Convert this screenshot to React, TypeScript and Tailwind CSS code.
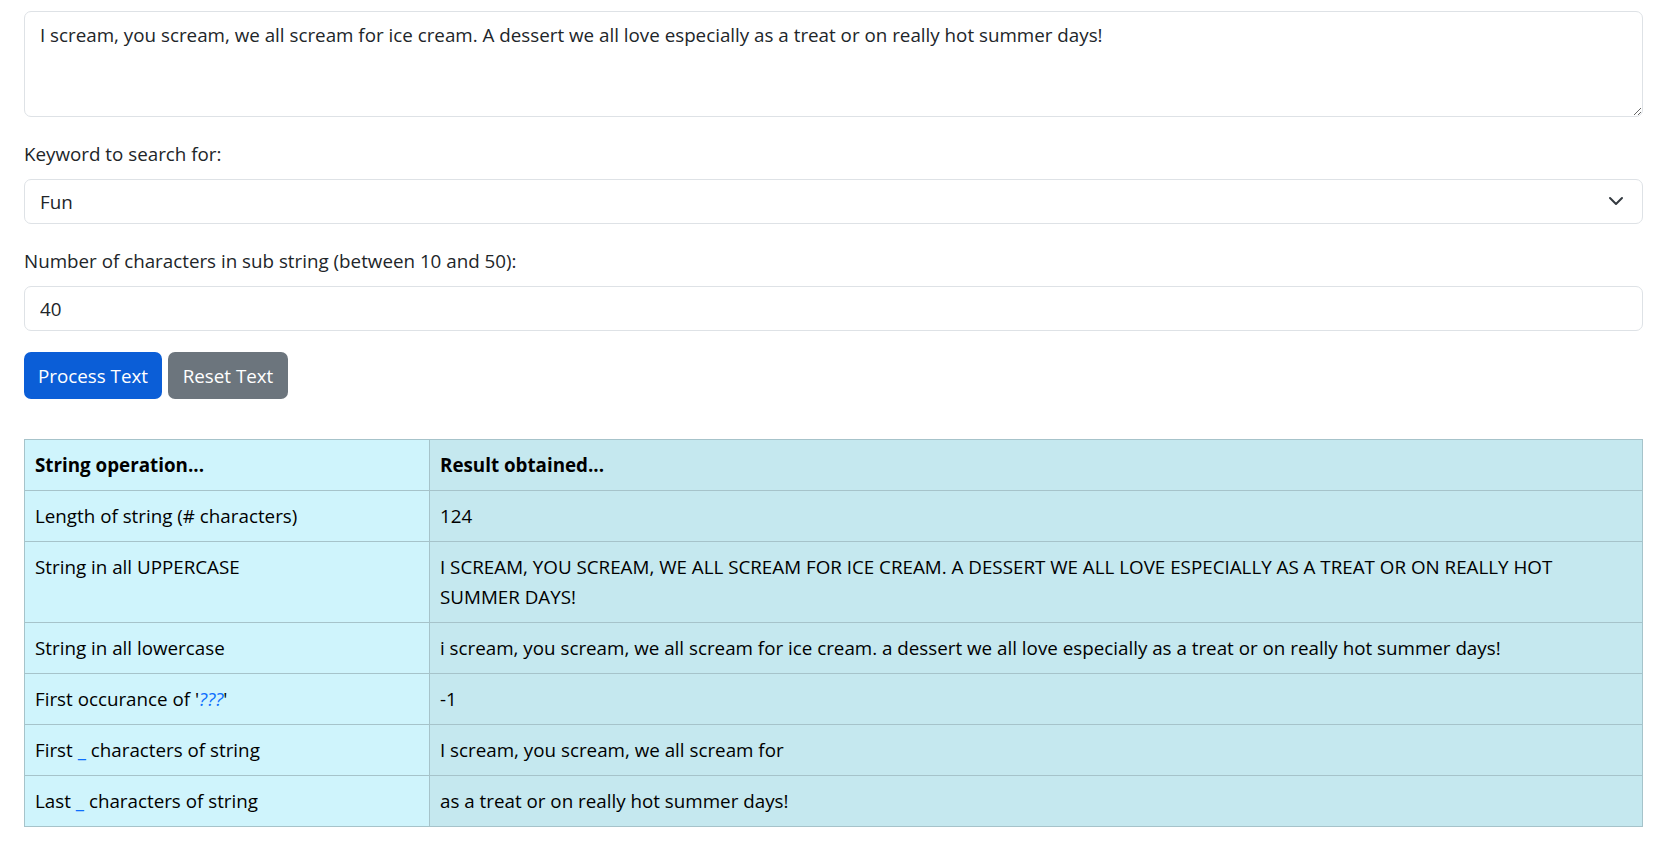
import { useState } from 'react';

const SOURCE =
  'I scream, you scream, we all scream for ice cream. A dessert we all love especially as a treat or on really hot summer days!';

export default function App() {
  const [text, setText] = useState(SOURCE);
  const [keyword, setKeyword] = useState('Fun');
  const [count, setCount] = useState('40');

  const rows = [
    { op: <>Length of string (# characters)</>, result: String(SOURCE.length) },
    { op: <>String in all UPPERCASE</>, result: SOURCE.toUpperCase() },
    { op: <>String in all lowercase</>, result: SOURCE.toLowerCase() },
    {
      op: (
        <>
          First occurance of '<span className="italic text-[#0d6efd]">???</span>'
        </>
      ),
      result: '-1',
    },
    {
      op: (
        <>
          First <span className="text-[#0d6efd]">_</span> characters of string
        </>
      ),
      result: SOURCE.slice(0, 40),
    },
    {
      op: (
        <>
          Last <span className="text-[#0d6efd]">_</span> characters of string
        </>
      ),
      result: SOURCE.slice(-40),
    },
  ];

  return (
    <div className="min-h-screen bg-white pl-[24px] pr-[17px] pt-[11px] font-['Open_Sans',_'Noto_Sans',_sans-serif] text-[18.8px] leading-[30px] text-[#212529]">
      {/* text input */}
      <textarea
        value={text}
        onChange={(e) => setText(e.target.value)}
        className="block h-[106px] w-full rounded-[7px] border border-[#dee2e6] px-[15px] py-[7.5px] text-[18.8px] leading-[30px] text-[#212529] outline-none"
      />

      <label className="mt-[22px] mb-[10px] block">Keyword to search for:</label>
      <div className="relative">
        <select
          value={keyword}
          onChange={(e) => setKeyword(e.target.value)}
          className="block h-[45px] w-full appearance-none rounded-[7px] border border-[#dee2e6] bg-white px-[15px] text-[18.8px] text-[#212529] outline-none"
        >
          <option>Fun</option>
          <option>Cream</option>
          <option>Scream</option>
        </select>
        <svg
          className="pointer-events-none absolute right-[17px] top-[14px]"
          width="20"
          height="16"
          viewBox="0 0 16 16"
          fill="none"
          stroke="#343a40"
          strokeWidth="2"
          strokeLinecap="round"
          strokeLinejoin="round"
        >
          <path d="m2 5 6 6 6-6" />
        </svg>
      </div>

      <label className="mt-[22px] mb-[10px] block">
        Number of characters in sub string (between 10 and 50):
      </label>
      <input
        value={count}
        onChange={(e) => setCount(e.target.value)}
        className="block h-[45px] w-full rounded-[7px] border border-[#dee2e6] px-[15px] text-[18.8px] text-[#212529] outline-none"
      />

      <div className="mt-[21px] flex gap-[6px]">
        <button className="h-[47px] w-[138px] rounded-[7px] bg-[#0b5ed7] text-white">
          Process Text
        </button>
        <button className="h-[47px] w-[120px] rounded-[7px] bg-[#6c757d] text-white">
          Reset Text
        </button>
      </div>

      {/* results */}
      <table className="mt-[40px] w-full border-collapse text-black">
        <thead>
          <tr>
            <th className="w-[405px] border border-[#a6c3ca] bg-[#cff4fc] px-[10px] py-[10px] text-left font-bold">
              String operation...
            </th>
            <th className="border border-[#a6c3ca] bg-[#c5e8ef] px-[10px] py-[10px] text-left font-bold">
              Result obtained...
            </th>
          </tr>
        </thead>
        <tbody>
          {rows.map((r, i) => (
            <tr key={i}>
              <td className="border border-[#a6c3ca] bg-[#cff4fc] px-[10px] py-[10px] align-top">
                {r.op}
              </td>
              <td className="border border-[#a6c3ca] bg-[#c5e8ef] px-[10px] py-[10px] align-top">
                {r.result}
              </td>
            </tr>
          ))}
        </tbody>
      </table>
    </div>
  );
}
